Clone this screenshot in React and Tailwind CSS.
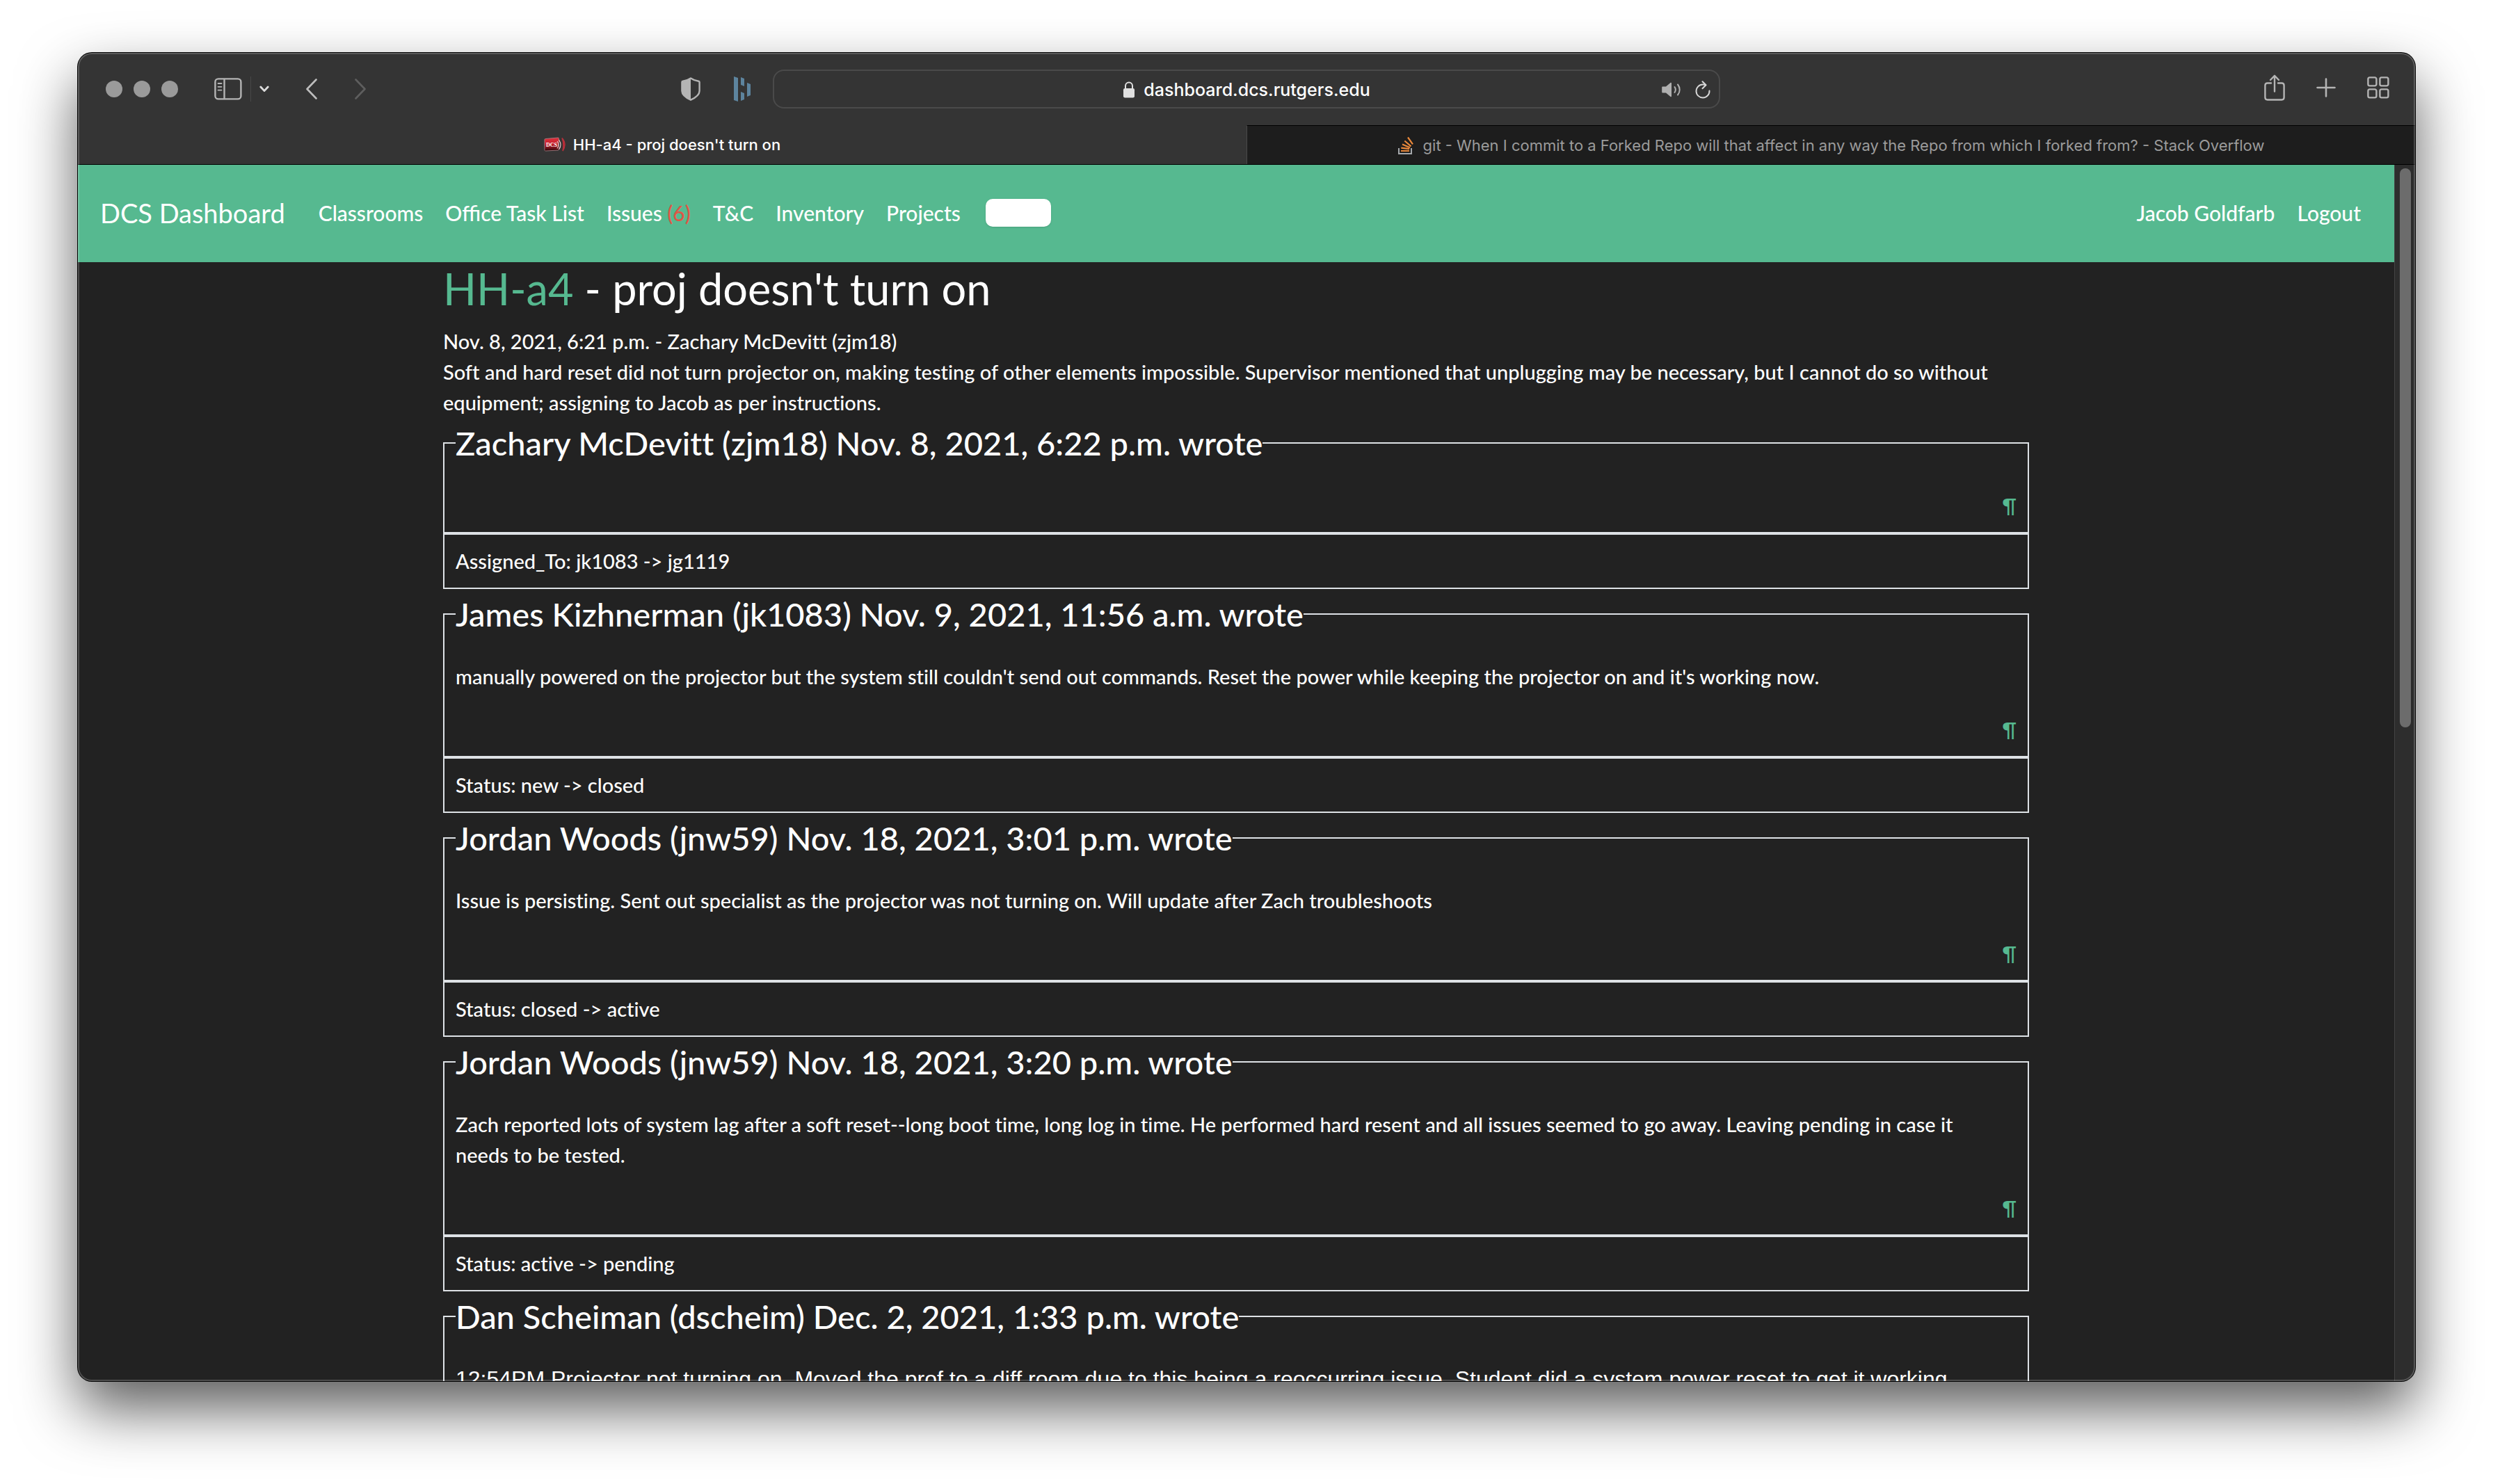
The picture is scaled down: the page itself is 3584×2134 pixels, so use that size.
const entries = [
  {
    heading: "Zachary McDevitt (zjm18) Nov. 8, 2021, 6:22 p.m. wrote",
    body: "",
    change: "Assigned_To: jk1083 -> jg1119",
  },
  {
    heading: "James Kizhnerman (jk1083) Nov. 9, 2021, 11:56 a.m. wrote",
    body: "manually powered on the projector but the system still couldn't send out commands. Reset the power while keeping the projector on and it's working now.",
    change: "Status: new -> closed",
  },
  {
    heading: "Jordan Woods (jnw59) Nov. 18, 2021, 3:01 p.m. wrote",
    body: "Issue is persisting. Sent out specialist as the projector was not turning on. Will update after Zach troubleshoots",
    change: "Status: closed -> active",
  },
  {
    heading: "Jordan Woods (jnw59) Nov. 18, 2021, 3:20 p.m. wrote",
    body: "Zach reported lots of system lag after a soft reset--long boot time, long log in time. He performed hard resent and all issues seemed to go away. Leaving pending in case it\nneeds to be tested.",
    change: "Status: active -> pending",
  },
  {
    heading: "Dan Scheiman (dscheim) Dec. 2, 2021, 1:33 p.m. wrote",
    body: "12:54PM Projector not turning on. Moved the prof to a diff room due to this being a reoccurring issue. Student did a system power reset to get it working.",
    pasted: true,
    change: "",
  },
];

function SidebarIcon() {
  return (
    <svg width="40" height="32" viewBox="0 0 40 32" fill="none" stroke="#b4b4b4" strokeWidth="2.4">
      <rect x="1.4" y="1.4" width="37" height="29" rx="4.5" />
      <path d="M14.5 1.5v29" />
      <path d="M5.5 8h5M5.5 12.8h5M5.5 17.6h5" strokeWidth="1.8" strokeLinecap="round" />
    </svg>
  );
}

function ChevronDown() {
  return (
    <svg width="14" height="10" viewBox="0 0 14 10" fill="none" stroke="#dcdcdc" strokeWidth="2.8" strokeLinecap="round" strokeLinejoin="round">
      <path d="M1.8 2 7 7.6 12.2 2" />
    </svg>
  );
}

function Chevron({ d, color }) {
  return (
    <svg width="18" height="30" viewBox="0 0 18 30" fill="none" stroke={color} strokeWidth="2.6" strokeLinecap="round" strokeLinejoin="round">
      <path d={d} />
    </svg>
  );
}

function ShieldIcon() {
  return (
    <svg width="28" height="34" viewBox="0 0 28 34">
      <path d="M14 1.6c3.6 2.4 7.4 3.8 11.2 4.2.9.1 1.4.6 1.4 1.5v12.4c0 6-5.4 9.6-12.6 13-7.2-3.4-12.6-7-12.6-13V7.3c0-.9.5-1.4 1.4-1.5C6.6 5.4 10.4 4 14 1.6z" fill="none" stroke="#b4b4b4" strokeWidth="2.4" />
      <path d="M14 1.6C10.4 4 6.6 5.4 2.8 5.8c-.9.1-1.4.6-1.4 1.5v12.4c0 6 5.4 9.6 12.6 13z" fill="#b4b4b4" />
    </svg>
  );
}

function BarsIcon() {
  return (
    <svg width="26" height="36" viewBox="0 0 26 36" fill="#5d849e">
      <path d="M0 0l6 2v34l-6-2zM10 1l5 2v11l-5-2zM10 22l5 2v9l-5 2zM19 9l5 2v16l-5 2z" />
    </svg>
  );
}

function LockIcon() {
  return (
    <svg width="18" height="24" viewBox="0 0 18 24">
      <rect x="1" y="10" width="16" height="13.5" rx="2.2" fill="#e0e0e0" />
      <path d="M4 11V6.5a5 5 0 0 1 10 0V11" fill="none" stroke="#e0e0e0" strokeWidth="2" />
    </svg>
  );
}

function SpeakerIcon() {
  return (
    <svg width="28" height="24" viewBox="0 0 28 24" fill="none" stroke="#b0b0b0" strokeWidth="2" strokeLinecap="round">
      <path d="M1.5 7.5h4.5L12.5 2c.6-.5 1.5-.2 1.5.6v18.8c0 .8-.9 1.1-1.5.6L6 16.5H1.5c-.8 0-1.3-.5-1.3-1.3V8.8c0-.8.5-1.3 1.3-1.3z" fill="#b0b0b0" stroke="none" />
      <path d="M18.5 8c1.6 2.4 1.6 5.6 0 8M23 4.5c3.6 4.4 3.6 10.6 0 15" />
    </svg>
  );
}

function ReloadIcon() {
  return (
    <svg width="22" height="26" viewBox="0 0 22 26" fill="none" stroke="#d6d6d6" strokeWidth="2" strokeLinecap="round" strokeLinejoin="round">
      <path d="M20.5 14.5A9.5 9.5 0 1 1 11 5.5c1.5 0 3 .2 4.2.8" />
      <path d="M10.5 1.2l5 5-5 5" />
    </svg>
  );
}

function ShareIcon() {
  return (
    <svg width="30" height="38" viewBox="0 0 30 38" fill="none" stroke="#b4b4b4" strokeWidth="2.4" strokeLinecap="round" strokeLinejoin="round">
      <path d="M10 12.5H4.8c-2.2 0-3.4 1.2-3.4 3.4v17.2c0 2.2 1.2 3.4 3.4 3.4h20.4c2.2 0 3.4-1.2 3.4-3.4V15.9c0-2.2-1.2-3.4-3.4-3.4H20" />
      <path d="M15 24.5V2M9 8l6-6.2L21 8" />
    </svg>
  );
}

function PlusIcon() {
  return (
    <svg width="28" height="28" viewBox="0 0 28 28" fill="none" stroke="#b4b4b4" strokeWidth="2.6" strokeLinecap="round">
      <path d="M14 1.5v25M1.5 14h25" />
    </svg>
  );
}

function GridIcon() {
  return (
    <svg width="32" height="32" viewBox="0 0 32 32" fill="none" stroke="#b4b4b4" strokeWidth="2.4">
      <rect x="1.4" y="1.4" width="12" height="12" rx="2.4" />
      <rect x="18.4" y="1.4" width="12" height="12" rx="2.4" />
      <rect x="1.4" y="18.4" width="12" height="12" rx="2.4" />
      <rect x="18.4" y="18.4" width="12" height="12" rx="2.4" />
    </svg>
  );
}

function DcsFavicon() {
  return (
    <svg width="32" height="22" viewBox="0 0 32 22">
      <defs>
        <linearGradient id="dcs" x1="0" y1="0" x2="0" y2="1">
          <stop offset="0" stopColor="#e0303c" />
          <stop offset="0.5" stopColor="#c41f2c" />
          <stop offset="1" stopColor="#2a0508" />
        </linearGradient>
      </defs>
      <path d="M2.5 2.5L20 1c1 0 1.5.4 1.5 1.4V17.5c0 1-.5 1.5-1.5 1.6L2.5 20c-1 0-1.6-.5-1.6-1.5V4c0-1 .6-1.5 1.6-1.5z" fill="url(#dcs)" stroke="#a8868a" strokeWidth="0.8" />
      <path d="M19 6c2 3 2 7.5 0 10.5M21.5 4c3 4.5 3 10 0 14" fill="none" stroke="#e8c8ca" strokeWidth="1.2" />
      <path d="M26 1.5c5 5.5 5 12.5 1 18.5 1.5-6.5 1.5-12.5-1-18.5z" fill="#c8222e" stroke="#b5303b" strokeWidth="1.6" />
      <text x="3" y="14" fontSize="8" fontWeight="700" fontFamily="Liberation Serif, serif" fill="#fff">DCS</text>
    </svg>
  );
}

function StackOverflowIcon() {
  return (
    <svg width="24" height="26" viewBox="0 0 24 26" fill="none">
      <path d="M1 17v8h18v-8" stroke="#a5a8ab" strokeWidth="2" />
      <path d="M4 21h12M4.3 16.6l11.8 1.6M6 11.6l11 4.6M9.3 6.5l9.2 7.8M14 1.5l7 9.9" stroke="#e8873a" strokeWidth="2.2" />
    </svg>
  );
}

function Toolbar() {
  return (
    <div className="grid h-[104px] shrink-0 grid-cols-[1fr_minmax(0,1362px)_1fr] items-center">
      <div className="flex items-center justify-between pr-[30px] pl-10">
        <div className="flex items-center">
          <div className="flex gap-4">
            <button aria-label="Close" className="size-6 rounded-full bg-[#9a9a9a]" />
            <button aria-label="Minimize" className="size-6 rounded-full bg-[#9a9a9a]" />
            <button aria-label="Zoom" className="size-6 rounded-full bg-[#9a9a9a]" />
          </div>
          <button aria-label="Sidebar" className="ml-[52px]"><SidebarIcon /></button>
          <div className="ml-3 h-9 w-px bg-[#484848]" />
          <button aria-label="Tab groups" className="ml-3"><ChevronDown /></button>
          <button aria-label="Back" className="ml-[52px]"><Chevron d="M15.5 1.5L2.5 15l13 13.5" color="#bdbdbd" /></button>
          <button aria-label="Forward" className="ml-[52px]"><Chevron d="M2.5 1.5l13 13.5-13 13.5" color="#5e5e5e" /></button>
        </div>
        <div className="flex items-center gap-12">
          <button aria-label="Privacy report"><ShieldIcon /></button>
          <button aria-label="Extension"><BarsIcon /></button>
        </div>
      </div>
      <div className="grid h-14 grid-cols-[1fr_auto_1fr] items-center rounded-2xl border-2 border-[#4a4a4a] px-3 pt-[2px]">
        <label htmlFor="address" className="col-start-2 flex items-center gap-3">
          <LockIcon />
          <input
            id="address"
            aria-label="Address"
            defaultValue="dashboard.dcs.rutgers.edu"
            className="field-sizing-content bg-transparent text-[25px] leading-8 font-medium text-white outline-none"
          />
        </label>
        <div className="flex items-center justify-end gap-5">
          <button aria-label="Mute"><SpeakerIcon /></button>
          <button aria-label="Reload"><ReloadIcon /></button>
        </div>
      </div>
      <div className="flex items-center justify-end gap-[45px] pr-[37px] pb-1">
        <button aria-label="Share"><ShareIcon /></button>
        <button aria-label="New tab"><PlusIcon /></button>
        <button aria-label="Tab overview"><GridIcon /></button>
      </div>
    </div>
  );
}

function Tabs() {
  return (
    <div className="grid h-[57px] shrink-0 grid-cols-2 border-b border-black text-[22px] leading-7">
      <button className="flex items-center justify-center gap-[10px] font-medium text-white">
        <DcsFavicon />
        <span>HH-a4 - proj doesn't turn on</span>
      </button>
      <button className="flex items-center justify-center gap-3 border-t border-l border-t-black border-l-[#4a4a4a] bg-[#1d1d1d] text-[#9b9b9b]">
        <StackOverflowIcon />
        <span>git - When I commit to a Forked Repo will that affect in any way the Repo from which I forked from? - Stack Overflow</span>
      </button>
    </div>
  );
}

function NavLink({ children }) {
  return <a href="#" className="px-4 text-white">{children}</a>;
}

function Navbar() {
  return (
    <nav className="flex h-[140px] items-center bg-[#56b990] px-8 pb-[2px] text-[30px] leading-[44px] font-medium">
      <a href="#" className="mr-8 text-[38px] font-normal text-white">DCS Dashboard</a>
      <NavLink>Classrooms</NavLink>
      <NavLink>Office Task List</NavLink>
      <NavLink>Issues <span className="text-[#df5646]">(6)</span></NavLink>
      <NavLink>T&amp;C</NavLink>
      <NavLink>Inventory</NavLink>
      <NavLink>Projects</NavLink>
      <select aria-label="Theme" className="ml-5 h-10 w-[94px] appearance-none rounded-[10px] bg-white shadow-sm" />
      <div className="ml-auto flex">
        <NavLink>Jacob Goldfarb</NavLink>
        <NavLink>Logout</NavLink>
      </div>
    </nav>
  );
}

function Entry({ heading, body, pasted, change }) {
  return (
    <article>
      <fieldset className="border-2 border-[#dee2e6] px-4 pb-4">
        <legend className="text-[47px] leading-[72px]">{heading}</legend>
        <div className="pt-8">
          {body && (
            <p className={pasted ? "mb-8 font-['Liberation_Sans',sans-serif] text-[32px] font-normal" : "mb-8 whitespace-pre-line"}>{body}</p>
          )}
          <div className="text-right">
            <a href="#" className="text-[#56b990]">¶</a>
          </div>
        </div>
      </fieldset>
      {change && <div className="border-2 border-[#dee2e6] p-4">{change}</div>}
    </article>
  );
}

export default function App() {
  return (
    <div className="h-screen overflow-hidden bg-white px-28 pt-[76px] pb-[148px] font-['Inter',sans-serif]">
      <div className="relative flex h-full flex-col overflow-hidden rounded-[20px] bg-[#343434] shadow-[0_0_0_1px_#000,0_40px_84px_rgba(0,0,0,0.64)]">
        <Toolbar />
        <Tabs />
        <div className="flex min-h-0 flex-1">
          <div className="min-w-0 flex-1 overflow-hidden bg-[#222222] font-['Lato',sans-serif] text-white">
            <Navbar />
            <main className="mx-auto max-w-[2280px] text-[29px] leading-[44px] font-medium [font-variant-ligatures:none]">
              <h1 className="mb-4 text-[63px] leading-[76px] font-normal">
                <a href="#" className="text-[#56b990]">HH-a4</a> - proj doesn't turn on
              </h1>
              <p>Nov. 8, 2021, 6:21 p.m. - Zachary McDevitt (zjm18)</p>
              <p>
                Soft and hard reset did not turn projector on, making testing of other elements impossible. Supervisor mentioned that unplugging may be necessary, but I cannot do so without equipment; assigning to Jacob as per instructions.
              </p>
              {entries.map((entry) => (
                <Entry key={entry.heading} {...entry} />
              ))}
            </main>
          </div>
          <div className="w-[30px] shrink-0 border-l border-[#444444] bg-[#2d2d2d] pt-[5px] pl-[7px]">
            <div className="h-[804px] w-4 rounded-full bg-[#6c6c6c]" />
          </div>
        </div>
        <div className="pointer-events-none absolute inset-0 rounded-[20px] border-2 border-white/20" />
      </div>
    </div>
  );
}
